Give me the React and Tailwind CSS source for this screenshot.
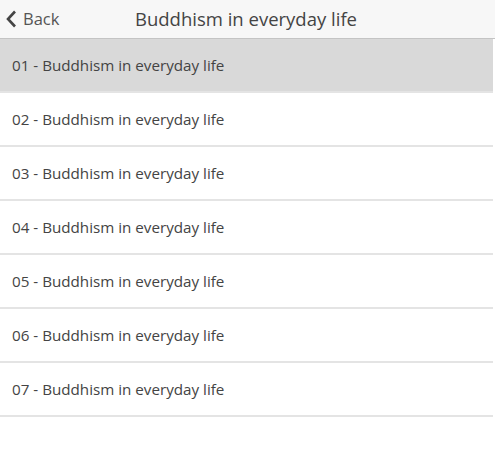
export default function App() {
  const items = [1, 2, 3, 4, 5, 6, 7];
  return (
    <div className="w-[495px] h-[468px] bg-white text-[#444]" style={{ fontFamily: '"Open Sans", "Noto Sans", sans-serif' }}>
      <div className="relative h-[39px] bg-[#f7f7f7] border-b border-[#c4c4c4] flex items-center justify-center">
        <div className="absolute left-[5px] top-0 h-full flex items-center gap-[6px] text-[16.5px] text-[#555]">
          <svg width="12" height="18" viewBox="0 0 12 18" fill="none">
            <path d="M10 1.5 L3 9 L10 16.5" stroke="#444" strokeWidth="2.6" />
          </svg>
          <span>Back</span>
        </div>
        <div className="mr-[3px] text-[18.5px] text-[#444]">Buddhism in everyday life</div>
      </div>
      <div className="w-[493px]">
        {items.map((n) => (
          <div
            key={n}
            className={`h-[54px] flex items-center pl-[12px] text-[15.2px] border-b-2 border-[#e4e4e4] ${n === 1 ? 'bg-[#d9d9d9]' : 'bg-white'}`}
          >
            0{n} - Buddhism in everyday life
          </div>
        ))}
      </div>
    </div>
  );
}
